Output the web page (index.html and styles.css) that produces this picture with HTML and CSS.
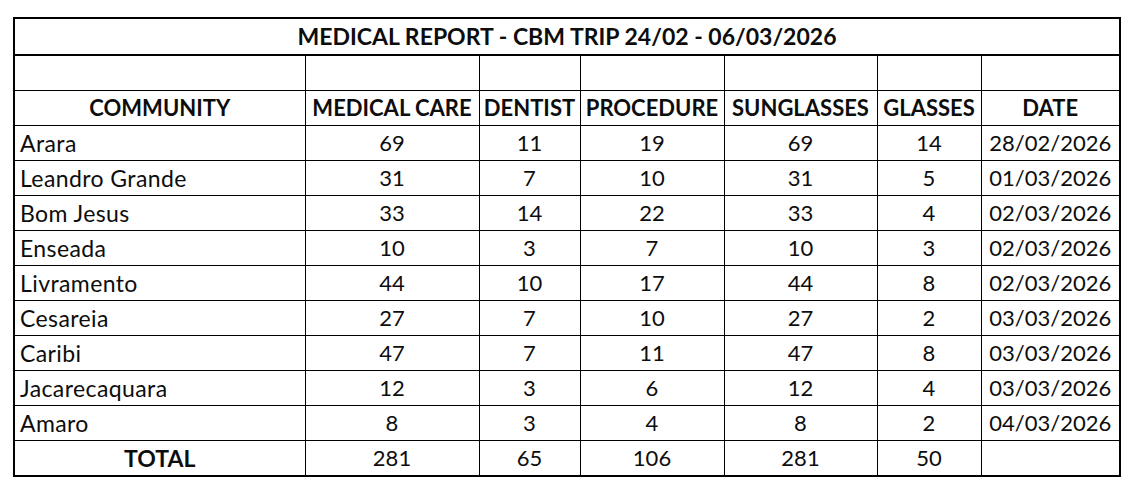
FILE: index.html
```html
<!DOCTYPE html>
<html>
<head>
<meta charset="utf-8">
<link rel="stylesheet" href="styles.css">
</head>
<body>
<div class="sheet">
<table class="report">
<colgroup>
<col class="c-com"><col class="c-med"><col class="c-den"><col class="c-pro"><col class="c-sun"><col class="c-gla"><col class="c-dat">
</colgroup>
<tr class="title"><td colspan="7">MEDICAL REPORT - CBM TRIP 24/02 - 06/03/2026</td></tr>
<tr class="blank"><td></td><td></td><td></td><td></td><td></td><td></td><td></td></tr>
<tr class="head"><td>COMMUNITY</td><td>MEDICAL CARE</td><td>DENTIST</td><td>PROCEDURE</td><td>SUNGLASSES</td><td>GLASSES</td><td>DATE</td></tr>
<tr><td class="name">Arara</td><td>69</td><td>11</td><td>19</td><td>69</td><td>14</td><td>28/02/2026</td></tr>
<tr><td class="name">Leandro Grande</td><td>31</td><td>7</td><td>10</td><td>31</td><td>5</td><td>01/03/2026</td></tr>
<tr><td class="name">Bom Jesus</td><td>33</td><td>14</td><td>22</td><td>33</td><td>4</td><td>02/03/2026</td></tr>
<tr><td class="name">Enseada</td><td>10</td><td>3</td><td>7</td><td>10</td><td>3</td><td>02/03/2026</td></tr>
<tr><td class="name">Livramento</td><td>44</td><td>10</td><td>17</td><td>44</td><td>8</td><td>02/03/2026</td></tr>
<tr><td class="name">Cesareia</td><td>27</td><td>7</td><td>10</td><td>27</td><td>2</td><td>03/03/2026</td></tr>
<tr><td class="name">Caribi</td><td>47</td><td>7</td><td>11</td><td>47</td><td>8</td><td>03/03/2026</td></tr>
<tr><td class="name">Jacarecaquara</td><td>12</td><td>3</td><td>6</td><td>12</td><td>4</td><td>03/03/2026</td></tr>
<tr><td class="name">Amaro</td><td>8</td><td>3</td><td>4</td><td>8</td><td>2</td><td>04/03/2026</td></tr>
<tr class="total"><td class="bold">TOTAL</td><td>281</td><td>65</td><td>106</td><td>281</td><td>50</td><td></td></tr>
</table>
</div>
</body>
</html>
```

FILE: styles.css
```css
html, body {
  margin: 0;
  padding: 0;
  background: #ffffff;
}
.sheet {
  padding: 17px 0 0 13px;
}
.report {
  border-collapse: collapse;
  table-layout: fixed;
  width: 1108px;
  border: 2px solid #000;
  font-family: "Lato", "Open Sans", sans-serif;
  font-size: 22px;
  color: #0d0d0d;
}
.c-com { width: 291px; }
.c-med { width: 174px; }
.c-den { width: 101px; }
.c-pro { width: 144px; }
.c-sun { width: 153px; }
.c-gla { width: 104px; }
.c-dat { width: 139px; }
.report td {
  border: 1px solid #000;
  height: 34px;
  padding: 0;
  text-align: center;
  white-space: nowrap;
  overflow: hidden;
  line-height: 1;
}
.report .title td {
  height: 35px;
  font-size: 23px;
  font-weight: bold;
  border-bottom: 2px solid #000;
}
.report .head td {
  font-weight: bold;
}
.report td.name {
  text-align: left;
  padding-left: 5px;
  font-size: 23px;
  letter-spacing: 0.4px;
}
.report td.bold {
  font-size: 23px;
  font-weight: bold;
}
```
